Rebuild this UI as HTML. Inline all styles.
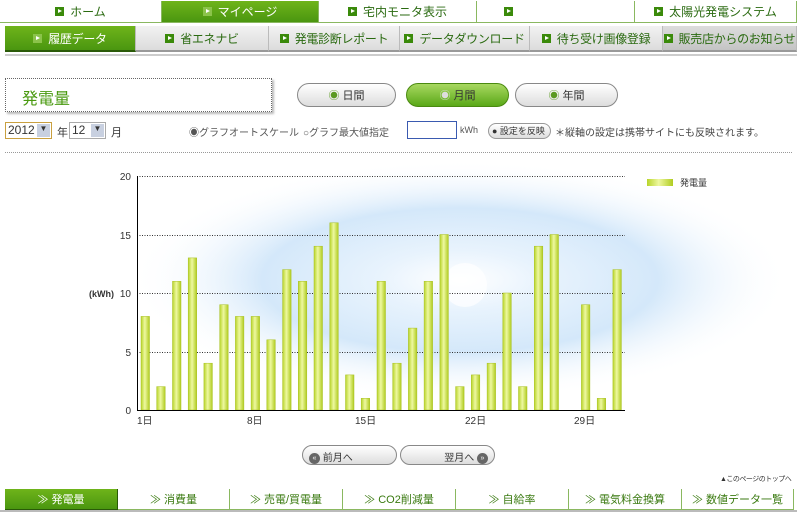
<!DOCTYPE html>
<html><head><meta charset="utf-8"><style>
*{margin:0;padding:0;box-sizing:border-box}
body{width:797px;height:512px;background:#fff;position:relative;overflow:hidden;font-family:"Liberation Sans","Noto Sans CJK JP",sans-serif;font-size:12px;color:#333;white-space:nowrap}
.a{position:absolute}
.c{display:flex;align-items:center;justify-content:center}
.ic{display:inline-block;width:9px;height:9px;background:#3a8a0a;margin-right:6px;position:relative}
.ic:after{content:"";position:absolute;left:3px;top:2px;border-left:4px solid #fff;border-top:2.5px solid transparent;border-bottom:2.5px solid transparent}
.t1{top:1px;height:22px;border-right:1px solid #8ab860;font-size:12px;color:#2a6a10;background:#fff;border-bottom:1px solid #8ab860}
.t2{top:26px;height:26px;font-size:12px;letter-spacing:-0.3px;color:#2a6a10;background:linear-gradient(#f2f2f2,#dcdcdc);border-right:1px solid #bbb;border-bottom:2px solid #999}
.g{background:linear-gradient(#6fb41a,#4a9610)!important;color:#fff!important}
.btn{top:83px;height:24px;border:1px solid #888;border-radius:12px;background:linear-gradient(#fff,#ddd);font-size:11px;color:#333}
.bt{top:489px;height:21px;font-size:11px;color:#3a7a10;border-right:1px solid #8ab860;border-bottom:1px solid #8ab860}
.ci{display:inline-block;width:11px;height:11px;border-radius:50%;background:#666;color:#fff;font-size:7px;line-height:11px;text-align:center;vertical-align:middle}
</style></head><body>
<div class="a t1 c" style="left:0;width:162px"><span class="ic"></span>ホーム</div>
<div class="a t1 c g" style="left:162px;width:157px"><span class="ic" style="background:#8bc34a"></span>マイページ</div>
<div class="a t1 c" style="left:319px;width:158px"><span class="ic"></span>宅内モニタ表示</div>
<div class="a t1 c" style="left:477px;width:158px;justify-content:flex-start;padding-left:27px"><span class="ic"></span></div>
<div class="a t1 c" style="left:635px;width:162px"><span class="ic"></span>太陽光発電システム</div>
<div class="a t2 c g" style="left:5px;width:131px;border-bottom:2px solid #2a5a08"><span class="ic" style="background:#8bc34a"></span>履歴データ</div>
<div class="a t2 c" style="left:136px;width:133px"><span class="ic"></span>省エネナビ</div>
<div class="a t2 c" style="left:269px;width:131px"><span class="ic"></span>発電診断レポート</div>
<div class="a t2 c" style="left:400px;width:130px"><span class="ic"></span>データダウンロード</div>
<div class="a t2 c" style="left:530px;width:133px"><span class="ic"></span>待ち受け画像登録</div>
<div class="a t2 c" style="left:663px;width:134px;background:linear-gradient(#ddd,#c4c4c4)"><span class="ic"></span>販売店からのお知らせ</div>
<div class="a" style="left:5px;top:54px;width:792px;height:2px;background:#ccc"></div>

<div class="a" style="left:5px;top:78px;width:267px;height:34px;border:1px dotted #666;box-shadow:2px 2px 2px #bbb;font-size:16px;color:#4a9a10;padding:6px 0 0 16px">発電量</div>
<div class="a btn c" style="left:297px;width:99px"><span style="color:#5a9a20">◉</span>&nbsp;日間</div>
<div class="a btn c" style="left:406px;width:103px;background:linear-gradient(#a8d860,#5aa818);border-color:#4a8a10"><span style="color:#ddd">◉</span>&nbsp;月間</div>
<div class="a btn c" style="left:515px;width:103px"><span style="color:#5a9a20">◉</span>&nbsp;年間</div>

<div class="a" style="left:5px;top:122px;width:47px;height:17px;border:1px solid #c9a040;font-size:12px;padding-left:2px">2012<span style="position:absolute;right:1px;top:1px;width:13px;height:13px;background:#c8d0e0;font-size:8px;text-align:center">▼</span></div>
<div class="a" style="left:57px;top:124px;font-size:11px">年</div>
<div class="a" style="left:69px;top:122px;width:37px;height:17px;border:1px solid #aaa;font-size:12px;padding-left:2px">12<span style="position:absolute;right:1px;top:1px;width:13px;height:13px;background:#c8d0e0;font-size:8px;text-align:center">▼</span></div>
<div class="a" style="left:111px;top:124px;font-size:11px">月</div>
<div class="a" style="left:189px;top:124px;font-size:10px;color:#555">◉グラフオートスケール</div>
<div class="a" style="left:303px;top:124px;font-size:10px;color:#555">○グラフ最大値指定</div>
<div class="a" style="left:407px;top:121px;width:50px;height:18px;border:1px solid #3a5ab0"></div>
<div class="a" style="left:460px;top:125px;font-size:9px;color:#555">kWh</div>
<div class="a" style="left:488px;top:123px;width:63px;height:16px;border:1px solid #999;border-radius:8px;background:linear-gradient(#fff,#ddd);font-size:9px;padding-left:3px;line-height:14px">● 設定を反映</div>
<div class="a" style="left:555px;top:124px;font-size:10px;color:#444">＊縦軸の設定は携帯サイトにも反映されます。</div>
<div class="a" style="left:5px;top:152px;width:787px;border-top:1px dotted #999"></div>

<svg class="a" style="left:0;top:160px" width="797" height="280">
<defs>
<radialGradient id="bg" cx="0.5" cy="0.5" r="0.5"><stop offset="0" stop-color="#fff"/><stop offset="0.25" stop-color="#e8f3fd"/><stop offset="0.6" stop-color="#d4e8fa"/><stop offset="1" stop-color="#fff" stop-opacity="0"/></radialGradient>
<linearGradient id="bar" x1="0" x2="1"><stop offset="0" stop-color="#b8d42a"/><stop offset="0.45" stop-color="#eef8a0"/><stop offset="1" stop-color="#b0cc20"/></linearGradient>
</defs>
<ellipse cx="460" cy="120" rx="330" ry="120" fill="url(#bg)"/>
<circle cx="465" cy="125" r="22" fill="#fff" opacity="0.7"/>
<g stroke="#333" stroke-dasharray="1,1.5" stroke-width="1">
<line x1="137" y1="16.5" x2="625" y2="16.5"/><line x1="137" y1="75.5" x2="625" y2="75.5"/><line x1="137" y1="133.5" x2="625" y2="133.5"/><line x1="137" y1="192.5" x2="625" y2="192.5"/>
</g>
<g font-size="10" fill="#333" text-anchor="end">
<text x="131" y="20">20</text><text x="131" y="79">15</text><text x="131" y="137">10</text><text x="131" y="196">5</text><text x="131" y="254">0</text>
<text x="114" y="137" font-weight="bold" font-size="9">(kWh)</text>
</g>
<g fill="url(#bar)" stroke="#a8c020" stroke-width="0.5" id="bars"></g>
<line x1="137.5" y1="16" x2="137.5" y2="250" stroke="#000"/>
<line x1="137" y1="250.5" x2="625" y2="250.5" stroke="#000"/>
<g font-size="10" fill="#333"><text x="137" y="264">1日</text><text x="247" y="264">8日</text><text x="355" y="264">15日</text><text x="465" y="264">22日</text><text x="574" y="264">29日</text></g>
<rect x="647" y="19" width="26" height="7" fill="url(#bar)"/>
<text x="680" y="26" font-size="9" fill="#333">発電量</text>
</svg>
<script>
var v=[8,2,11,13,4,9,8,8,6,12,11,14,16,3,1,11,4,7,11,15,2,3,4,10,2,14,15,0,9,1,12],g=document.getElementById('bars'),s='';
v.forEach(function(n,i){if(!n)return;var h=n*11.7,x=141+i*15.73;s+='<rect x="'+x.toFixed(1)+'" y="'+(250-h).toFixed(1)+'" width="8.5" height="'+h.toFixed(1)+'"/>';});
g.innerHTML=s;
</script>

<div class="a" style="left:302px;top:445px;width:95px;height:20px;border:1px solid #888;border-radius:10px;background:linear-gradient(#fff,#ddd);font-size:10px;padding:3px 0 0 6px"><span class="ci">«</span> 前月へ</div>
<div class="a" style="left:400px;top:445px;width:95px;height:20px;border:1px solid #888;border-radius:10px;background:linear-gradient(#fff,#ddd);font-size:10px;padding:3px 6px 0 0;text-align:right">翌月へ <span class="ci">»</span></div>
<div class="a" style="left:720px;top:474px;font-size:7px;color:#333;letter-spacing:-0.5px">▲このページのトップへ</div>

<div class="a bt c g" style="left:5px;width:113px;border-color:#2a5a08">≫ 発電量</div>
<div class="a bt c" style="left:118px;width:112px">≫ 消費量</div>
<div class="a bt c" style="left:230px;width:113px">≫ 売電/買電量</div>
<div class="a bt c" style="left:343px;width:113px">≫ CO2削減量</div>
<div class="a bt c" style="left:456px;width:113px">≫ 自給率</div>
<div class="a bt c" style="left:569px;width:113px">≫ 電気料金換算</div>
<div class="a bt c" style="left:682px;width:112px">≫ 数値データ一覧</div>
<div class="a" style="left:0;top:510px;width:797px;height:2px;background:#bbb"></div>
</body></html>
